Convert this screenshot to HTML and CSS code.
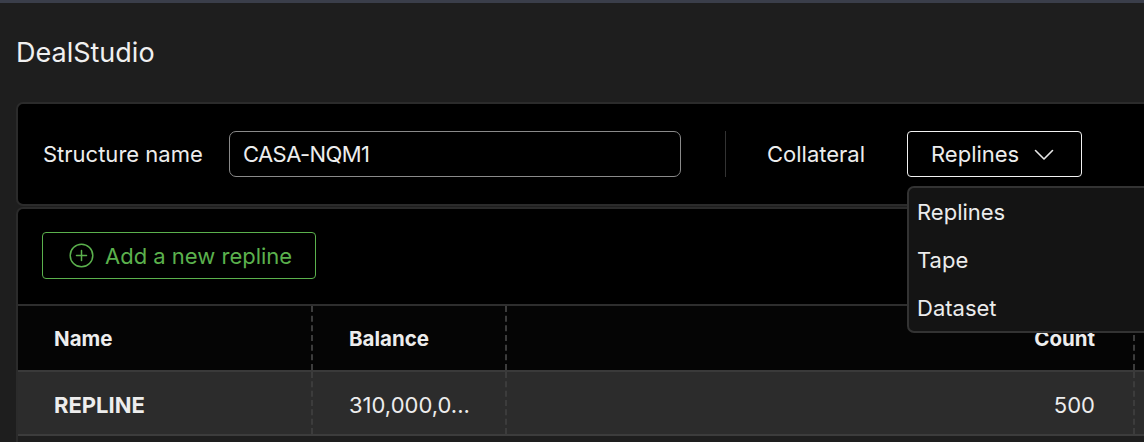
FILE: index.html
```html
<!DOCTYPE html>
<html>
<head>
<meta charset="utf-8">
<link rel="stylesheet" href="styles.css">
</head>
<body>
<div class="topstrip"></div>
<div class="app">
  <h1 class="title">DealStudio</h1>
  <div class="panel panel-structure">
    <div class="field-label">Structure name</div>
    <div class="text-input">CASA-NQM1</div>
    <div class="divider"></div>
    <div class="field-label collateral-label">Collateral</div>
    <div class="select-wrap">
      <div class="select">
        <span>Replines</span>
        <svg class="chevron" width="20" height="12" viewBox="0 0 20 12"><path d="M1.5 1.5 L10 10 L18.5 1.5" fill="none" stroke="#e8e8e8" stroke-width="1.6" stroke-linecap="round" stroke-linejoin="round"/></svg>
      </div>
      <div class="menu">
        <div class="menu-item">Replines</div>
        <div class="menu-item">Tape</div>
        <div class="menu-item">Dataset</div>
      </div>
    </div>
  </div>
  <div class="panel panel-table">
    <div class="toolbar">
      <button class="add-btn">
        <svg width="25" height="25" viewBox="0 0 25 25"><circle cx="12.5" cy="12.5" r="11.3" fill="none" stroke="#5bb14d" stroke-width="1.5"/><path d="M12.5 7.5 V17.5 M7.5 12.5 H17.5" stroke="#5bb14d" stroke-width="1.5" stroke-linecap="round"/></svg>
        <span>Add a new repline</span>
      </button>
    </div>
    <div class="table">
      <div class="row head">
        <div class="cell c1">Name</div>
        <div class="cell c2">Balance</div>
        <div class="cell c3 right">Count</div>
        <div class="cell c4"></div>
      </div>
      <div class="row body">
        <div class="cell c1 strong">REPLINE</div>
        <div class="cell c2">310,000,0...</div>
        <div class="cell c3 right">500</div>
        <div class="cell c4"></div>
      </div>
      <div class="row filler"></div>
    </div>
  </div>
</div>
</body>
</html>
```
FILE: styles.css
```css
html, body {
  margin: 0;
  padding: 0;
  background: #1e1e1e;
  overflow: hidden;
  height: 442px;
}
body {
  font-family: Inter, "Noto Sans", sans-serif;
  color: #ededed;
}
.topstrip {
  height: 3px;
  background: #3a3e4a;
}
.app {
  padding-left: 16px;
}
.title {
  margin: 33px 0 0 0;
  font-size: 27px;
  line-height: 33px;
  font-weight: 400;
  color: #f0f0f0;
  height: 66px;
}
.panel {
  background: #000;
  border: 2px solid #2b2b2b;
  border-radius: 7px;
  margin-right: -40px;
}
.panel-structure {
  display: flex;
  align-items: center;
  padding-left: 25px;
  box-sizing: border-box;
  height: 104px;
  position: relative;
  z-index: 2;
}
.field-label {
  width: 186px;
  font-size: 22px;
  flex: none;
}
.text-input {
  width: 452px;
  height: 46px;
  box-sizing: border-box;
  border: 1.5px solid #8a8a8a;
  border-radius: 7px;
  font-size: 22px;
  letter-spacing: -0.6px;
  display: flex;
  align-items: center;
  padding-left: 13px;
  flex: none;
}
.divider {
  width: 1px;
  height: 46px;
  background: #333;
  margin: 0 41px 0 44px;
  flex: none;
}
.collateral-label {
  width: 140px;
}
.select-wrap {
  position: relative;
  flex: none;
}
.select {
  width: 175px;
  height: 46px;
  box-sizing: border-box;
  border: 1.5px solid #f2f2f2;
  border-radius: 4px;
  display: flex;
  align-items: center;
  padding-left: 23px;
  font-size: 22px;
  gap: 15px;
}
.chevron {
  margin-top: 1px;
}
.menu {
  position: absolute;
  left: 0;
  top: 55px;
  width: 260px;
  height: 147px;
  box-sizing: border-box;
  background: #141414;
  border: 2px solid #333;
  border-radius: 7px;
  padding-top: 0;
}
.menu-item {
  height: 48px;
  line-height: 48px;
  padding-left: 8px;
  font-size: 22px;
  color: #ececec;
}
.panel-table {
  margin-top: 1px;
  border-bottom: none;
  border-radius: 7px 7px 0 0;
}
.toolbar {
  padding: 23px 0 25px 24px;
}
.add-btn {
  width: 274px;
  height: 47px;
  box-sizing: border-box;
  background: transparent;
  border: 1.5px solid #5bb14d;
  border-radius: 4px;
  color: #5bb14d;
  font-family: Inter, "Noto Sans", sans-serif;
  font-size: 22px;
  display: flex;
  align-items: center;
  padding: 0 0 0 26px;
  gap: 11px;
}
.table {
  display: flex;
  flex-direction: column;
}
.row {
  display: flex;
}
.row.head {
  background: #050505;
  border-top: 2px solid #2e2e2e;
  height: 64px;
  font-weight: 700;
  font-size: 20.5px;
}
.row.body {
  background: #2c2c2c;
  border-top: 2px solid #3a3a3a;
  border-bottom: 2px solid #3c3c3c;
  height: 62px;
  font-size: 22px;
}
.row.body .cell {
  padding-top: 4px;
}
.row.filler {
  height: 6px;
  background: #1e1e1e;
}
.cell {
  display: flex;
  align-items: center;
  box-sizing: border-box;
  flex: none;
}
.c1 {
  width: 295px;
  padding-left: 36px;
  border-right: 2px dashed #3c3c3c;
}
.c2 {
  width: 194px;
  padding-left: 36px;
  border-right: 2px dashed #3c3c3c;
}
.c3 {
  width: 628px;
  padding-right: 38px;
  border-right: 2px dashed #3c3c3c;
}
.c4 {
  width: 60px;
}
.right {
  justify-content: flex-end;
}
.strong {
  font-weight: 700;
}
```
